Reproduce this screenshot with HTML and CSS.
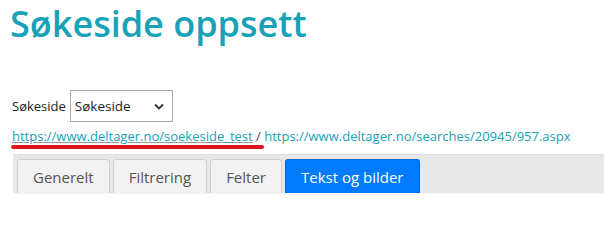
FILE: index.html
```html
<!DOCTYPE html>
<html lang="no">
<head>
<meta charset="utf-8">
<title>Søkeside oppsett</title>
<link rel="stylesheet" href="styles.css">
</head>
<body>
<div class="page">
  <h1 class="title">Søkeside oppsett</h1>
  <div class="select-row">
    <label class="select-label" for="sok">Søkeside</label>
    <div class="select-box" id="sok">
      <span class="select-value">Søkeside</span>
      <svg class="chevron" width="10" height="7" viewBox="0 0 10 7"><path d="M1 1.5 L5 5.5 L9 1.5" fill="none" stroke="#333" stroke-width="1.8"/></svg>
    </div>
  </div>
  <div class="links">
    <span class="mark"><a class="link" href="#">https://www.deltager.no/soekeside_test</a> /</span>
    <a class="link" href="#">https://www.deltager.no/searches/20945/957.aspx</a>
  </div>
  <div class="tabs">
    <div class="tab">Generelt</div>
    <div class="tab">Filtrering</div>
    <div class="tab">Felter</div>
    <div class="tab active">Tekst og bilder</div>
  </div>
</div>
</body>
</html>
```
FILE: styles.css
```css
html, body {
  margin: 0;
  padding: 0;
  background: #fff;
  overflow: hidden;
}
.page {
  font-family: "Open Sans", "Noto Sans", sans-serif;
  width: 604px;
  height: 202px;
  overflow: hidden;
}
.title {
  margin: 0;
  padding: 0 0 0 10px;
  font-size: 36px;
  font-weight: 600;
  line-height: 48px;
  color: #17a2b8;
}
.select-row {
  display: flex;
  align-items: center;
  margin: 42px 0 0 12px;
  gap: 4px;
}
.select-label {
  font-size: 13px;
  color: #222;
}
.select-box {
  box-sizing: border-box;
  width: 103px;
  height: 32px;
  border: 1px solid #aaa;
  display: flex;
  align-items: center;
  justify-content: space-between;
  padding: 0 8px 0 4px;
  font-size: 13.5px;
  color: #222;
}
.links {
  margin: 5px 0 0 12px;
  font-size: 13px;
  line-height: 18px;
  color: #444;
}
.mark {
  position: relative;
}
.mark::after {
  content: "";
  position: absolute;
  left: -1px;
  right: -3px;
  bottom: -4px;
  height: 4px;
  background: #e0161e;
  border-radius: 2px;
}
.link {
  color: #17a2b8;
  text-decoration: none;
}
.mark .link {
  text-decoration: underline;
  text-decoration-color: #999;
}
.tabs {
  box-sizing: border-box;
  margin: 9px 0 0 13px;
  width: 600px;
  height: 40px;
  padding: 4px 4px 0;
  background: #e8e8e8;
  border-top: 1px solid #dcdcdc;
  border-bottom: 1px solid #f4f4f4;
  display: flex;
  gap: 3px;
  align-items: flex-end;
}
.tab {
  box-sizing: border-box;
  height: 34px;
  padding: 0 15px;
  display: flex;
  align-items: center;
  font-size: 15px;
  color: #555;
  background: #f2f2f2;
  border: 1px solid #cfcfcf;
  border-bottom: none;
  border-radius: 3px 3px 0 0;
}
.tab.active {
  background: #007bff;
  border-color: #0068d6;
  color: #fff;
}
```
